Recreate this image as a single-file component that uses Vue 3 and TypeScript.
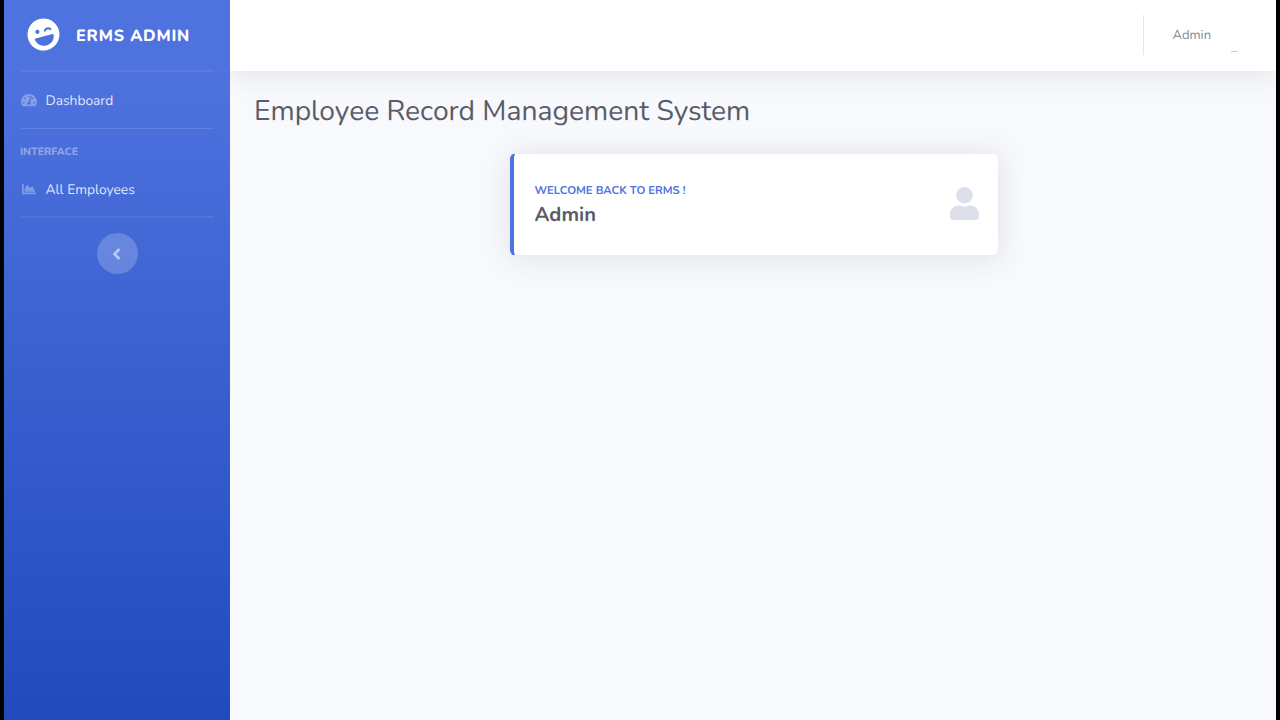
<script setup lang="ts">
const appName: string = 'ERMS Admin'
const pageTitle: string = 'Employee Record Management System'
const userName: string = 'Admin'
</script>

<template>
  <div class="frame">
    <aside class="sidebar">
      <a class="brand">
        <svg class="brand-icon" viewBox="0 0 496 512"><path d="M248 8C111 8 0 119 0 256s111 248 248 248 248-111 248-248S385 8 248 8zm20.1 198.1c4-25.2 34.2-42.1 59.9-42.1s55.9 16.9 59.9 42.1c1.7 11.1-11.4 18.3-19.8 10.8l-9.5-8.5c-14.8-13.2-46.2-13.2-61 0L288 217c-8.4 7.4-21.6.3-19.9-10.9zM168 160c17.7 0 32 14.3 32 32s-14.3 32-32 32-32-14.3-32-32 14.3-32 32-32zm230.9 141C389.4 376 327.6 432 252 432h-8c-75.6 0-137.4-56-146.9-131-1.2-9.2 6.2-17 15.9-17h270c9.7 0 17.1 7.8 15.9 17z" /></svg>
        <span class="brand-text">{{ appName }}</span>
      </a>
      <hr class="soft" />
      <a class="nav-link dashboard">
        <svg class="nav-icon" viewBox="0 0 576 512"><path d="M288 32C128.94 32 0 160.94 0 320c0 52.8 14.25 102.26 39.06 144.8 5.61 9.62 16.3 15.2 27.44 15.2h443c11.14 0 21.83-5.58 27.44-15.2C561.75 422.26 576 372.8 576 320c0-159.06-128.94-288-288-288zm0 64c14.71 0 26.58 10.13 30.32 23.65-1.11 2.26-2.64 4.23-3.45 6.67l-9.22 27.67c-5.13 3.49-10.97 6.01-17.64 6.01-17.67 0-32-14.33-32-32S270.33 96 288 96zM96 384c-17.67 0-32-14.33-32-32s14.33-32 32-32 32 14.33 32 32-14.33 32-32 32zm48-160c-17.67 0-32-14.33-32-32s14.33-32 32-32 32 14.33 32 32-14.33 32-32 32zm246.77-72.41l-61.33 184C343.13 347.33 352 364.54 352 384c0 11.72-3.38 22.55-8.88 32H232.88c-5.5-9.45-8.88-20.28-8.88-32 0-33.94 26.5-61.43 59.9-63.59l61.34-184.01c4.17-12.56 17.73-19.45 30.36-15.17 12.57 4.19 19.35 17.79 15.17 30.36zm14.66 57.2l15.52-46.55c3.47-1.29 7.13-2.23 11.05-2.23 17.67 0 32 14.33 32 32s-14.33 32-32 32c-11.38-.01-21.38-5.94-26.57-15.22zM480 384c-17.67 0-32-14.33-32-32s14.33-32 32-32 32 14.33 32 32-14.33 32-32 32z" /></svg>
        <span>Dashboard</span>
      </a>
      <hr />
      <div class="heading">Interface</div>
      <a class="nav-link employees">
        <svg class="nav-icon" viewBox="0 0 512 512"><path d="M500 384c6.6 0 12 5.4 12 12v40c0 6.6-5.4 12-12 12H12c-6.6 0-12-5.4-12-12V76c0-6.6 5.4-12 12-12h40c6.6 0 12 5.4 12 12v308h436zM372.7 159.5L288 216l-85.3-113.7c-5.1-6.8-15.5-6.3-19.9 1L96 248v104h384l-89.9-187.8c-3.2-6.5-11.4-8.7-17.4-4.7z" /></svg>
        <span>All Employees</span>
      </a>
      <hr class="soft" />
      <button class="toggle" aria-label="Toggle sidebar">
        <svg viewBox="0 0 256 512"><path d="M31.7 239l136-136c9.4-9.4 24.6-9.4 33.9 0l22.6 22.6c9.4 9.4 9.4 24.6 0 33.9L127.9 256l96.4 96.4c9.4 9.4 9.4 24.6 0 33.9L201.7 409c-9.4 9.4-24.6 9.4-33.9 0l-136-136c-9.5-9.4-9.5-24.6-.1-34z" /></svg>
      </button>
    </aside>
    <div class="content">
      <header class="topbar">
        <div class="divider"></div>
        <span class="user">{{ userName }}</span>
        <i class="avatar"></i>
      </header>
      <main>
        <h1>{{ pageTitle }}</h1>
        <section class="card">
          <div class="card-text">
            <div class="welcome">Welcome back to ERMS !</div>
            <div class="name">{{ userName }}</div>
          </div>
          <svg class="user-icon" viewBox="0 0 448 512"><path d="M224 256c70.7 0 128-57.3 128-128S294.7 0 224 0 96 57.3 96 128s57.3 128 128 128zm89.6 32h-16.7c-22.2 10.2-46.9 16-72.9 16s-50.6-5.8-72.9-16h-16.7C60.2 288 0 348.2 0 422.4V464c0 26.5 21.5 48 48 48h352c26.5 0 48-21.5 48-48v-41.6c0-74.2-60.2-134.4-134.4-134.4z" /></svg>
        </section>
      </main>
    </div>
  </div>
</template>

<style scoped>
* { box-sizing: border-box; }
.frame {
  display: flex;
  width: 1280px;
  height: 720px;
  padding: 0 4px;
  background: #000;
  overflow: hidden;
  font-family: Nunito, Lato, sans-serif;
  text-rendering: geometricPrecision;
}
svg { display: block; fill: currentColor; flex: none; }
.sidebar {
  width: 226px;
  flex: none;
  display: flex;
  flex-direction: column;
  background: linear-gradient(180deg, #4e73df 10%, #224abe 100%);
}
.brand {
  height: 70px;
  display: flex;
  align-items: center;
  padding-left: 23px;
  color: #fff;
}
.brand-icon { width: 33px; height: 33px; margin-bottom: 1px; transform: rotate(-15deg); }
.brand-text {
  margin: 2px 0 0 16px;
  font-size: 16.2px;
  font-weight: 800;
  letter-spacing: 0.8px;
  text-transform: uppercase;
  white-space: nowrap;
}
hr {
  width: 193px;
  height: 1px;
  margin: 0 16.5px;
  border: 0;
  flex: none;
  background: rgba(255, 255, 255, 0.13);
}
.soft { height: 2px; background: rgba(255, 255, 255, 0.07); }
.nav-link {
  display: flex;
  align-items: center;
  padding-left: 16.5px;
  font-size: 13.75px;
  color: rgba(255, 255, 255, 0.85);
  white-space: nowrap;
}
.nav-icon { width: 16px; height: 14px; margin-right: 9px; color: rgba(255, 255, 255, 0.32); }
.dashboard { height: 56px; }
.heading {
  height: 47px;
  padding-left: 16px;
  line-height: 45px;
  font-size: 10.5px;
  font-weight: 800;
  text-transform: uppercase;
  color: rgba(255, 255, 255, 0.4);
}
.employees { height: 40px; align-items: flex-start; padding-top: 5px; line-height: 17px; }
.employees .nav-icon { margin-top: 1px; }
.toggle {
  width: 41px;
  height: 41px;
  margin: 15px 0 0 92.5px;
  padding: 0 0 0 15px;
  border: 0;
  border-radius: 50%;
  background: rgba(255, 255, 255, 0.2);
  color: rgba(255, 255, 255, 0.55);
}
.toggle svg { width: 9px; height: 18px; }
.content { flex: 1; background: #f8f9fc; }
.topbar {
  height: 70.5px;
  display: flex;
  justify-content: flex-end;
  align-items: center;
  background: #fff;
  box-shadow: 0 2px 28px rgba(58, 59, 69, 0.13);
  clip-path: inset(0 0 -60px 0);
}
.divider { width: 1px; height: 40px; background: #e3e6f0; }
.user { width: 39px; margin: -1px 19.5px 0 28.5px; font-size: 13px; color: #858796; }
.avatar { width: 7px; height: 1px; margin: 32px 38px 0 0; background: #c7c8cd; }
main { padding: 0 24px; }
h1 {
  margin: 0;
  padding-top: 23.5px;
  line-height: 34px;
  font-size: 28.25px;
  font-weight: 400;
  color: #5a5c69;
  white-space: nowrap;
}
.card {
  width: 489px;
  height: 103px;
  margin: 25px 0 0 256px;
  padding: 0 20px 0 20.5px;
  display: flex;
  align-items: center;
  justify-content: space-between;
  border: 1px solid #eceef4;
  border-left: 4px solid #4e73df;
  border-radius: 6px;
  background: #fff;
  box-shadow: 0 2px 28px rgba(58, 59, 69, 0.13);
}
.welcome { font-size: 11.3px; line-height: 17px; font-weight: 700; text-transform: uppercase; color: #4e73df; }
.name { margin-top: 5px; font-size: 20.1px; line-height: 24px; font-weight: 700; color: #5a5c69; }
.user-icon { width: 29px; height: 33px; margin: 0 -1px 3px 0; color: #dddfeb; }
</style>
